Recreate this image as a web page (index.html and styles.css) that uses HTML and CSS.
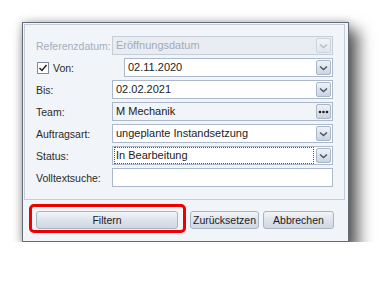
FILE: index.html
```html
<!DOCTYPE html>
<html lang="de">
<head>
    <meta charset="UTF-8">
    <title>Filter</title>
    <link rel="stylesheet" href="styles.css">
</head>
<body>
    <div class="dialog">
        <div class="frame">
            <div class="row">
                <label class="disabled">Referenzdatum:</label>
                <div class="field disabled-field">
                    <span class="value">Eröffnungsdatum</span>
                    <span class="drop"><svg width="9" height="6" viewBox="0 0 9 6"><path d="M1 1.5 L4.5 4.5 L8 1.5" fill="none" stroke="#b4bfcc" stroke-width="1.4"/></svg></span>
                </div>
            </div>
            <div class="row">
                <label class="check-label"><span class="check"><svg width="10" height="10" viewBox="0 0 10 10"><path d="M1.5 5 L4 7.5 L8.5 2" fill="none" stroke="#222" stroke-width="1.5"/></svg></span>Von:</label>
                <div class="field indent">
                    <span class="value">02.11.2020</span>
                    <span class="drop"><svg width="9" height="6" viewBox="0 0 9 6"><path d="M1 1.5 L4.5 4.5 L8 1.5" fill="none" stroke="#4a5563" stroke-width="1.4"/></svg></span>
                </div>
            </div>
            <div class="row">
                <label>Bis:</label>
                <div class="field">
                    <span class="value">02.02.2021</span>
                    <span class="drop"><svg width="9" height="6" viewBox="0 0 9 6"><path d="M1 1.5 L4.5 4.5 L8 1.5" fill="none" stroke="#4a5563" stroke-width="1.4"/></svg></span>
                </div>
            </div>
            <div class="row">
                <label>Team:</label>
                <div class="field readonly">
                    <span class="value">M Mechanik</span>
                    <span class="drop"><svg width="11" height="4" viewBox="0 0 11 4"><circle cx="2" cy="2" r="1.3" fill="#222"/><circle cx="5.5" cy="2" r="1.3" fill="#222"/><circle cx="9" cy="2" r="1.3" fill="#222"/></svg></span>
                </div>
            </div>
            <div class="row">
                <label>Auftragsart:</label>
                <div class="field">
                    <span class="value">ungeplante Instandsetzung</span>
                    <span class="drop"><svg width="9" height="6" viewBox="0 0 9 6"><path d="M1 1.5 L4.5 4.5 L8 1.5" fill="none" stroke="#4a5563" stroke-width="1.4"/></svg></span>
                </div>
            </div>
            <div class="row">
                <label>Status:</label>
                <div class="field">
                    <span class="value focus">In Bearbeitung</span>
                    <span class="drop"><svg width="9" height="6" viewBox="0 0 9 6"><path d="M1 1.5 L4.5 4.5 L8 1.5" fill="none" stroke="#4a5563" stroke-width="1.4"/></svg></span>
                </div>
            </div>
            <div class="row">
                <label>Volltextsuche:</label>
                <div class="field"></div>
            </div>
        </div>
        <div class="footer">
            <div class="highlight">
                <button class="btn wide">Filtern</button>
            </div>
            <button class="btn reset">Zurücksetzen</button>
            <button class="btn cancel">Abbrechen</button>
        </div>
    </div>
</body>
</html>
```

FILE: styles.css
```css
body {
    margin: 0;
    background-color: #fff;
    font-family: "Liberation Sans", Arial, sans-serif;
    font-size: 10.5px;
    color: #1c1c1c;
}
.dialog {
    margin: 22px 0 0 22px;
    width: 321px;
    height: 217px;
    border: 1px solid #666c73;
    background-color: #f1f4f8;
    box-shadow: 8px 10px 14px 2px rgba(0, 0, 0, 0.6), 0 0 8px rgba(0, 0, 0, 0.25);
    padding: 1px 3px 0 1px;
}
.frame {
    border: 1px solid #c3ccd8;
    padding: 11px 11px 12px 11px;
    display: flex;
    flex-direction: column;
    gap: 3px;
}
.row {
    display: flex;
    align-items: center;
    height: 19px;
}
.row label {
    width: 76px;
    flex: none;
    white-space: nowrap;
    color: #2b2b2b;
}
.row label.disabled {
    color: #a3aebc;
}
.check-label {
    display: flex;
    align-items: center;
    gap: 4px;
    margin-left: 1px;
}
.check {
    width: 10px;
    height: 10px;
    border: 1px solid #7d8b9c;
    background-color: #fff;
    display: flex;
}
.field {
    flex: 1;
    height: 17px;
    border: 1px solid #aab8ca;
    background-color: #fff;
    display: flex;
    align-items: center;
    padding-left: 3px;
    padding-right: 1px;
    font-size: 11px;
}
.field.indent {
    margin-left: 11px;
}
.disabled-field {
    background-color: #e9edf2;
    border-color: #c4cdd9;
    color: #a0abb9;
}
.readonly {
    background-color: #f1f4f8;
}
.value {
    flex: 1;
    line-height: 15px;
}
.value.focus {
    outline: 1px dotted #555;
    margin-right: 3px;
    padding-left: 1px;
    margin-left: -1px;
}
.drop {
    width: 13px;
    height: 13px;
    border: 1px solid #a9b6c7;
    border-radius: 2px;
    background: linear-gradient(#eef2f7, #cbd5e1);
    display: flex;
    align-items: center;
    justify-content: center;
}
.disabled-field .drop {
    background: linear-gradient(#f1f4f7, #e1e6ec);
    border-color: #ccd4de;
}
.footer {
    display: flex;
    align-items: flex-start;
    padding: 4px 0 0 5px;
}
.highlight {
    border: 3px solid #ee0000;
    border-radius: 5px;
    padding: 4px 5px 1px 4px;
    margin-right: 4px;
}
.btn {
    height: 18px;
    padding: 0;
    border: 1px solid #a7b4c4;
    border-radius: 3px;
    background: linear-gradient(#f3f5f8, #dde3eb 50%, #cfd7e2);
    font-family: "Liberation Sans", Arial, sans-serif;
    font-size: 10.5px;
    color: #1c1c1c;
}
.wide {
    width: 142px;
}
.reset {
    width: 69px;
    margin-top: 7px;
}
.cancel {
    width: 71px;
    margin-top: 7px;
    margin-left: 4px;
}
```
